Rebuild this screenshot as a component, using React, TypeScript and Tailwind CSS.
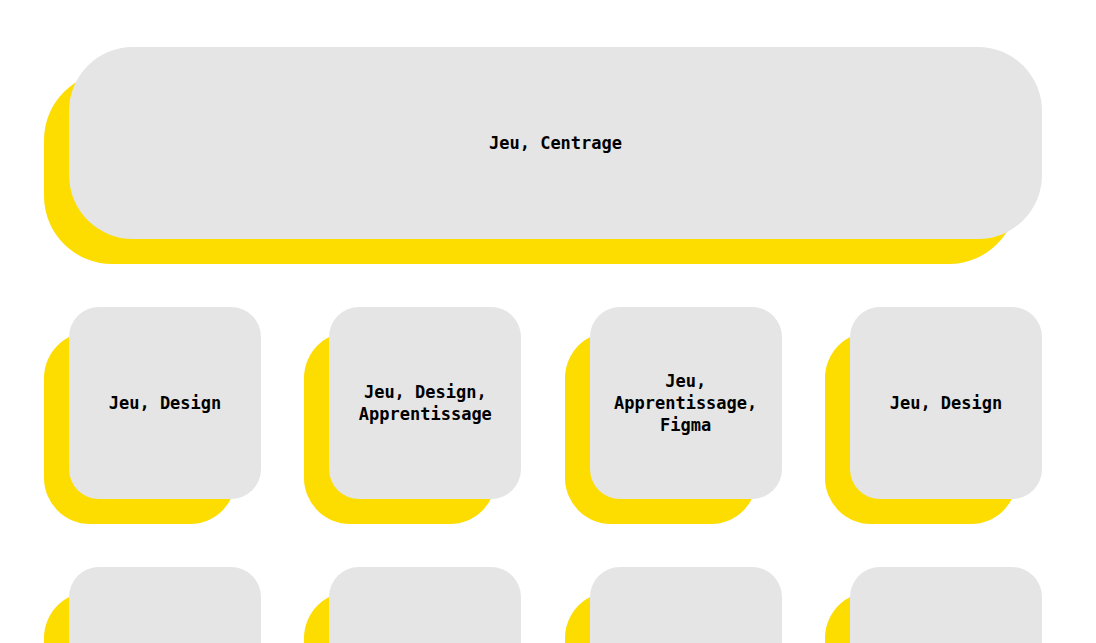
import React from "react";

const rows: string[][] = [
  ["Jeu, Design", "Jeu, Design, Apprentissage", "Jeu, Apprentissage, Figma", "Jeu, Design"],
  ["Jeu, Design", "Jeu, Figma", "Jeu, Apprentissage", "Jeu, Design"],
];

function Tile({ label }: { label: string }) {
  return (
    <div className="relative w-[192px] h-[192px]">
      {/* yellow offset backdrop */}
      <div className="absolute inset-0 -translate-x-[25px] translate-y-[25px] rounded-[46px] bg-[#fddc00]" />
      <div className="relative h-full rounded-[30px] bg-[#e5e5e5] flex items-center justify-center px-6 text-center">
        <span className="text-[17px] leading-[22px] font-bold text-black">{label}</span>
      </div>
    </div>
  );
}

export default function App() {
  return (
    <div
      className="min-h-screen bg-white pt-[47px] pl-[69px]"
      style={{ fontFamily: '"DejaVu Sans Mono", "Liberation Mono", monospace' }}
    >
      <div className="w-[973px] flex flex-col gap-[68px]">
        {/* Featured card */}
        <div className="relative h-[192px]">
          <div className="absolute inset-0 -translate-x-[25px] translate-y-[25px] rounded-[68px] bg-[#fddc00]" />
          <div className="relative h-full rounded-[64px] bg-[#e5e5e5] flex items-center justify-center">
            <span className="text-[17px] leading-[22px] font-bold text-black">Jeu, Centrage</span>
          </div>
        </div>

        {rows.map((row, i) => (
          <div key={i} className="flex justify-between">
            {row.map((label, j) => (
              <Tile key={j} label={label} />
            ))}
          </div>
        ))}
      </div>
    </div>
  );
}
